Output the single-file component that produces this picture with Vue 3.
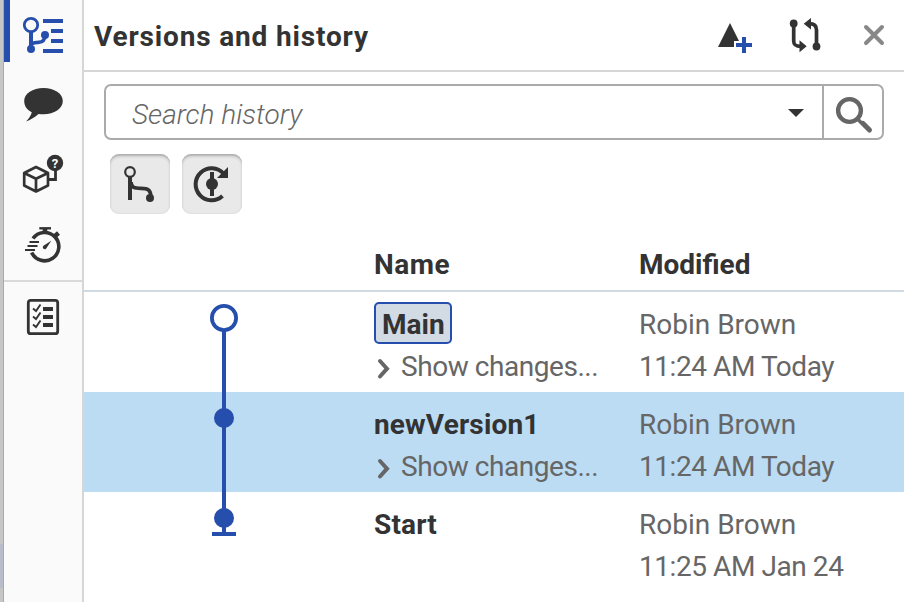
<script setup>
const rows = [
  { name: 'Main', current: true, changes: true, user: 'Robin Brown', time: '11:24 AM Today', kind: 'open' },
  { name: 'newVersion1', selected: true, changes: true, user: 'Robin Brown', time: '11:24 AM Today', kind: 'dot' },
  { name: 'Start', user: 'Robin Brown', time: '11:25 AM Jan 24', kind: 'start' },
]
</script>

<template>
  <div class="app">
    <div class="edge"><div class="edge-mark"></div></div>
    <nav class="rail">
      <button class="tool active" aria-label="Versions and history">
        <svg viewBox="4 0 78 70" width="78" height="70" fill="none" stroke="#264fad">
          <circle cx="31" cy="25" r="6.7" stroke-width="2.8" />
          <path d="M31 32V49" stroke-width="4" />
          <path d="M31 44.5C33 42.4 36 42.8 39 42.3C43.500 41.800 44.800 39.500 45 36" stroke-width="3.6" />
          <circle cx="31" cy="49" r="4" fill="#264fad" stroke="none" />
          <circle cx="45" cy="35" r="4" fill="#264fad" stroke="none" />
          <path d="M43 21H63M51 31H63M51 41H63M43 51H63" stroke-width="4" />
        </svg>
      </button>
      <button class="tool" aria-label="Comments">
        <svg viewBox="4 70 78 70" width="78" height="70" fill="#333">
          <path d="M43.500 88C54.300 88 62.800 93.500 62.800 101C62.800 108.500 54.300 114.300 43.500 114.300C41.800 114.300 40 114.200 38.500 113.900C34.500 117.500 30 120 26 121.600C28.500 119 31 115.800 31.800 112.300C27 110 24.200 106 24.200 101C24.200 93.500 32.700 88 43.500 88Z" />
        </svg>
      </button>
      <button class="tool" aria-label="Part properties">
        <svg viewBox="4 140 78 70" width="78" height="70" fill="none" stroke="#333">
          <path d="M36 167L48 173V185.500L36 191.500L24.200 185.500V173ZM24.200 173L36 178.800L48 173M36 178.800V191.500" stroke-width="2.700" stroke-linejoin="round" />
          <path d="M49 179.500H55.500V168" stroke-width="2.800" />
          <circle cx="55" cy="163" r="8.200" fill="#333" stroke="none" />
          <text x="55" y="168" text-anchor="middle" class="query">?</text>
        </svg>
      </button>
      <button class="tool" aria-label="Performance">
        <svg viewBox="4 210 78 70" width="78" height="70" fill="none" stroke="#333">
          <path d="M33 238.500A14.200 14.200 0 1 1 31.700 252.500" stroke-width="3.600" />
          <path d="M39.300 228.300H51" stroke-width="2.400" />
          <path d="M45 229V233M55 236L58.500 233" stroke-width="4.500" />
          <path d="M29.500 242H39M27.500 246H37.500M25 250H35" stroke-width="2" />
          <path d="M51.300 240.700L46.700 247.800A2 2 0 1 1 43.800 245.500Z" fill="#333" stroke="none" />
        </svg>
      </button>
      <div class="divider"></div>
      <button class="tool" aria-label="Checklist">
        <svg viewBox="4 282 78 70" width="78" height="70" fill="none" stroke="#333">
          <rect x="28.300" y="300.300" width="29.400" height="33.400" rx="2.500" stroke-width="2.800" />
          <path d="M43 309H53M43 317H53M43 325H53" stroke-width="4" />
          <path d="M33 308.500L36 311L40.500 304.500M33 316.500L36 319L40.500 312.500M33 324.500L36 327L40.500 320.500" stroke-width="1.900" />
        </svg>
      </button>
    </nav>

    <main class="panel">
      <header class="head">
        <h1>Versions and history</h1>
        <svg class="actions" viewBox="704 0 200 70" width="200" height="70" fill="none">
          <path d="M730 23L739 41H734V47H718Z" fill="#333" />
          <path d="M744 37V53M736 45H752" stroke="#264fad" stroke-width="4" />
          <g stroke="#333" stroke-width="3.700">
            <path d="M793.700 24V41C793.700 45 795.500 46.300 801 46.300" />
            <path d="M816.500 46V30C816.500 25.500 814 23.700 809 23.700" />
          </g>
          <g fill="#333">
            <circle cx="793.700" cy="23.500" r="3.900" />
            <circle cx="816.500" cy="46.500" r="3.900" />
            <path d="M799.500 40.300L806.700 46.300L799.500 52.200ZM811 18L803.700 23.700L811 29.500Z" />
          </g>
          <path d="M866 27L882 43M882 27L866 43" stroke="#888" stroke-width="4" stroke-linecap="round" />
        </svg>
      </header>

      <div class="search">
        <div class="field">
          <span class="hint">Search history</span>
          <svg width="16" height="8" viewBox="0 0 16 8"><path d="M0 0H16L8 8Z" fill="#333" /></svg>
        </div>
        <button class="go" aria-label="Search">
          <svg viewBox="824 86 58 52" width="58" height="52" fill="none" stroke="#666">
            <circle cx="849.500" cy="110.500" r="11.400" stroke-width="4.400" />
            <path d="M858 119.500L862 123.500" stroke-width="3.500" />
            <path d="M863 123.500L869.500 130" stroke-width="5" stroke-linecap="round" />
          </svg>
        </button>
      </div>

      <div class="filters">
        <button class="filter" aria-label="Show branches">
          <svg viewBox="110 154 60 60" width="60" height="60" fill="none" stroke="#333">
            <circle cx="130" cy="172" r="4.800" stroke-width="2.200" />
            <path d="M130 177V200" stroke-width="4" />
            <path d="M131 182C131 188 135 188.300 141 188.300C148.500 188.300 150.800 190.500 150.800 197" stroke-width="3.800" />
            <circle cx="150" cy="198" r="4" fill="#333" stroke="none" />
          </svg>
        </button>
        <button class="filter" aria-label="Show automatic versions">
          <svg viewBox="182 154 60 60" width="60" height="60" fill="none" stroke="#333">
            <path d="M223.500 173.500A16 16 0 1 0 222.500 196" stroke-width="4" />
            <path d="M228 167V178H217Z" fill="#333" stroke="none" />
            <path d="M212 172V196" stroke-width="4" />
            <circle cx="212" cy="184" r="6" fill="#333" stroke="none" />
          </svg>
        </button>
      </div>

      <div class="columns">
        <span></span><span class="name-head">Name</span><span>Modified</span>
      </div>
      <div v-for="row in rows" :key="row.name" class="row" :class="{ selected: row.selected }">
        <svg class="graph" viewBox="0 0 290 100" width="290" height="100" fill="none" stroke="#264fad">
          <template v-if="row.kind === 'open'">
            <path d="M140 38V100" stroke-width="4" />
            <circle cx="140" cy="26" r="12.100" stroke-width="3.800" fill="#fff" />
          </template>
          <template v-else-if="row.kind === 'dot'">
            <path d="M140 0V100" stroke-width="4" />
            <circle cx="140" cy="26" r="10" fill="#264fad" stroke="none" />
          </template>
          <template v-else>
            <path d="M140 0V42M128 42H152" stroke-width="4" />
            <circle cx="140" cy="26" r="10" fill="#264fad" stroke="none" />
          </template>
        </svg>
        <div class="cell">
          <div class="line"><span class="name" :class="{ current: row.current }">{{ row.name }}</span></div>
          <div v-if="row.changes" class="line changes">
            <svg width="27" height="42" viewBox="0 0 27 42" fill="none"><path d="M6 17L13 24.700L6 32.500" stroke="#666" stroke-width="4" stroke-linecap="round" /></svg>
            <span>Show changes...</span>
          </div>
        </div>
        <div class="cell meta">
          <div class="line">{{ row.user }}</div>
          <div class="line time">{{ row.time }}</div>
        </div>
      </div>
    </main>
  </div>
</template>

<style>
body { margin: 0; background: #fff; overflow: hidden; }
</style>

<style scoped>
* { box-sizing: border-box; }
.app { display: flex; width: 904px; height: 602px; overflow: hidden; font-family: Roboto, sans-serif; font-size: 28px; color: #333; background: #fff; }
button { display: block; border: 0; padding: 0; background: none; }
svg { display: block; flex: none; }
.edge { width: 4px; padding-top: 544px; background: #c6c6c4; border-right: 1px solid #aaa; }
.edge-mark { height: 44px; background: #b9bcc9; }
.rail { width: 80px; background: #fafafa; border-right: 2px solid #d6d6d6; }
.tool { width: 78px; height: 70px; position: relative; }
.active::before { content: ''; position: absolute; left: 0; top: 0; width: 6px; height: 62px; background: #264fad; }
.divider { height: 2px; background: #d9d9d9; }
.query { font: 700 13px Roboto, sans-serif; fill: #fff; stroke: none; }
.panel { width: 820px; }
.head { height: 72px; display: flex; justify-content: space-between; border-bottom: 2px solid #d6d6d6; padding-left: 10px; }
h1 { margin: 0; font-size: 28px; font-weight: 700; line-height: 74px; height: 70px; letter-spacing: 0.84px; white-space: nowrap; }
.search { display: flex; margin: 12px 20px 0; height: 56px; border: 2px solid #aaa; border-radius: 7px; }
.field { flex: 1; display: flex; align-items: center; justify-content: space-between; padding: 2px 18px 0 26px; }
.hint { font-style: italic; font-weight: 300; color: #666; white-space: nowrap; line-height: 48px; padding-top: 4px; }
.go { width: 60px; border-left: 2px solid #aaa; }
.filters { display: flex; gap: 12px; padding: 14px 26px 0; }
.filter { width: 60px; height: 60px; border-radius: 9px; background: #e9e9e9; box-shadow: inset 0 3px 3px -1px #aaa, inset 0 0 2px #ccc; }
.columns { height: 78px; border-bottom: 2px solid #d1d9e3; display: grid; grid-template-columns: 290px 265px 1fr; padding-top: 30px; line-height: 42px; font-weight: 700; }
.name-head { letter-spacing: 0.5px; }
.row { display: grid; grid-template-columns: 290px 265px 1fr; height: 100px; }
.selected { background: #bbdcf3; }
.cell { padding-top: 10px; }
.line { height: 42px; line-height: 46px; white-space: nowrap; }
.name { font-weight: 700; display: inline-block; letter-spacing: 0.15px; }
.current { height: 42px; line-height: 41px; width: 78px; padding-left: 6px; border: 2px solid #264fad; border-radius: 5px; background: #d2dae3; vertical-align: top; letter-spacing: 0; }
.changes { display: flex; color: #666; letter-spacing: -0.45px; }
.meta { color: #666; }
.time { letter-spacing: -0.43px; }
</style>
